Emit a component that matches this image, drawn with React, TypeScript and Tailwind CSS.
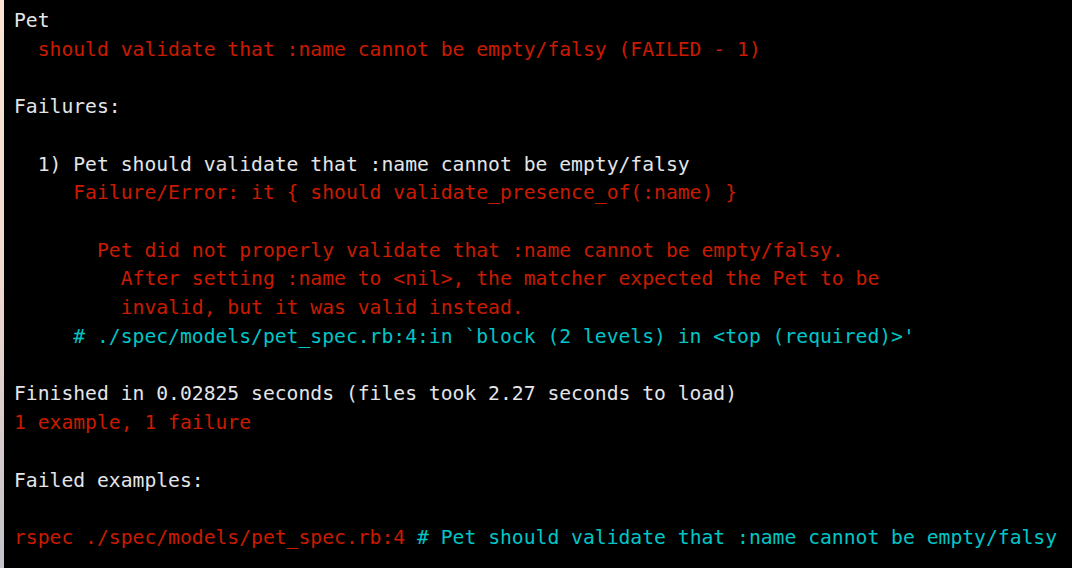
import React from "react";

type Seg = { text: string; color: "white" | "red" | "cyan" };

const colorClass: Record<Seg["color"], string> = {
    white: "text-[#e3e5e8]",
    red: "text-[#c91b00]",
    cyan: "text-[#00c5c7]",
};

const lines: Seg[][] = [
    [{ text: "Pet", color: "white" }],
    [{ text: "  should validate that :name cannot be empty/falsy (FAILED - 1)", color: "red" }],
    [],
    [{ text: "Failures:", color: "white" }],
    [],
    [{ text: "  1) Pet should validate that :name cannot be empty/falsy", color: "white" }],
    [{ text: "     Failure/Error: it { should validate_presence_of(:name) }", color: "red" }],
    [],
    [{ text: "       Pet did not properly validate that :name cannot be empty/falsy.", color: "red" }],
    [{ text: "         After setting :name to <nil>, the matcher expected the Pet to be", color: "red" }],
    [{ text: "         invalid, but it was valid instead.", color: "red" }],
    [{ text: "     # ./spec/models/pet_spec.rb:4:in `block (2 levels) in <top (required)>'", color: "cyan" }],
    [],
    [{ text: "Finished in 0.02825 seconds (files took 2.27 seconds to load)", color: "white" }],
    [{ text: "1 example, 1 failure", color: "red" }],
    [],
    [{ text: "Failed examples:", color: "white" }],
    [],
    [
        { text: "rspec ./spec/models/pet_spec.rb:4", color: "red" },
        { text: " # Pet should validate that :name cannot be empty/falsy", color: "cyan" },
    ],
];

const App: React.FC = () => {
    return (
        <div className="flex h-[568px] w-[1072px] overflow-hidden bg-black">
            {/* window edge */}
            <div className="w-[4px] shrink-0 bg-gradient-to-b from-[#fde4d2] via-[#f0d8cf] to-[#c2c2c9]" />
            <pre
                className="flex-1 pl-[10px] pt-[7px] text-[19.7px] leading-[28.72px] whitespace-pre"
                style={{ fontFamily: '"DejaVu Sans Mono", "Liberation Mono", monospace' }}
            >
                {lines.map((segs, i) => (
                    <div key={i} className="h-[28.72px]">
                        {segs.map((s, j) => (
                            <span key={j} className={colorClass[s.color]}>
                                {s.text}
                            </span>
                        ))}
                    </div>
                ))}
            </pre>
        </div>
    );
};

export default App;
